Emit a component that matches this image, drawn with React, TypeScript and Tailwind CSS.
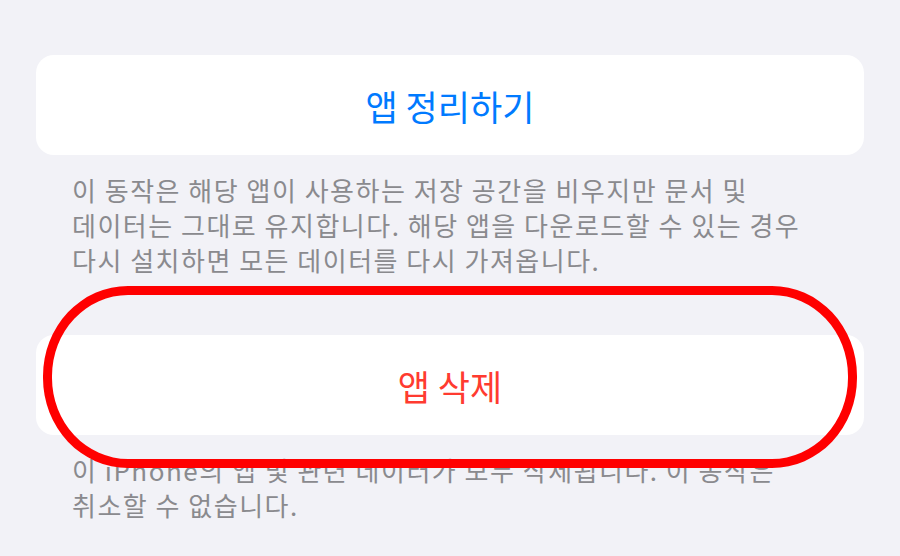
const font = { fontFamily: '"Noto Sans CJK KR", "Noto Sans", sans-serif' };

type ActionRowProps = {
  label: string;
  tone: "blue" | "red";
};

function ActionRow({ label, tone }: ActionRowProps) {
  return (
    <div className="flex h-[100px] items-center justify-center rounded-[18px] bg-white">
      <span
        className={
          tone === "blue"
            ? "text-[35px] leading-none text-[#007aff]"
            : "text-[35px] leading-none text-[#ff3b30]"
        }
      >
        {label}
      </span>
    </div>
  );
}

function Footer({ lines }: { lines: string[] }) {
  return (
    <div className="mt-[17px] px-[36px] text-[26px] leading-[35px] tracking-[1.5px] text-[#8a8a8e]">
      {lines.map((line) => (
        <div key={line} className="whitespace-nowrap">
          {line}
        </div>
      ))}
    </div>
  );
}

export default function App() {
  return (
    <div className="h-[556px] w-[900px] overflow-hidden bg-[#f2f2f7]" style={font}>
      <div className="px-[36px] pt-[55px]">
        <ActionRow label="앱 정리하기" tone="blue" />
        <Footer
          lines={[
            "이 동작은 해당 앱이 사용하는 저장 공간을 비우지만 문서 및",
            "데이터는 그대로 유지합니다. 해당 앱을 다운로드할 수 있는 경우",
            "다시 설치하면 모든 데이터를 다시 가져옵니다.",
          ]}
        />

        <div className="relative mt-[58px]">
          <ActionRow label="앱 삭제" tone="red" />
          {/* red marker circled around the delete button */}
          <div className="pointer-events-none absolute -top-[49px] left-[7px] h-[182px] w-[814px] rounded-[85px/90px] border-[9px] border-[#ff0000]" />
        </div>
        <Footer
          lines={[
            "이 iPhone의 앱 및 관련 데이터가 모두 삭제됩니다. 이 동작은",
            "취소할 수 없습니다.",
          ]}
        />
      </div>
    </div>
  );
}
